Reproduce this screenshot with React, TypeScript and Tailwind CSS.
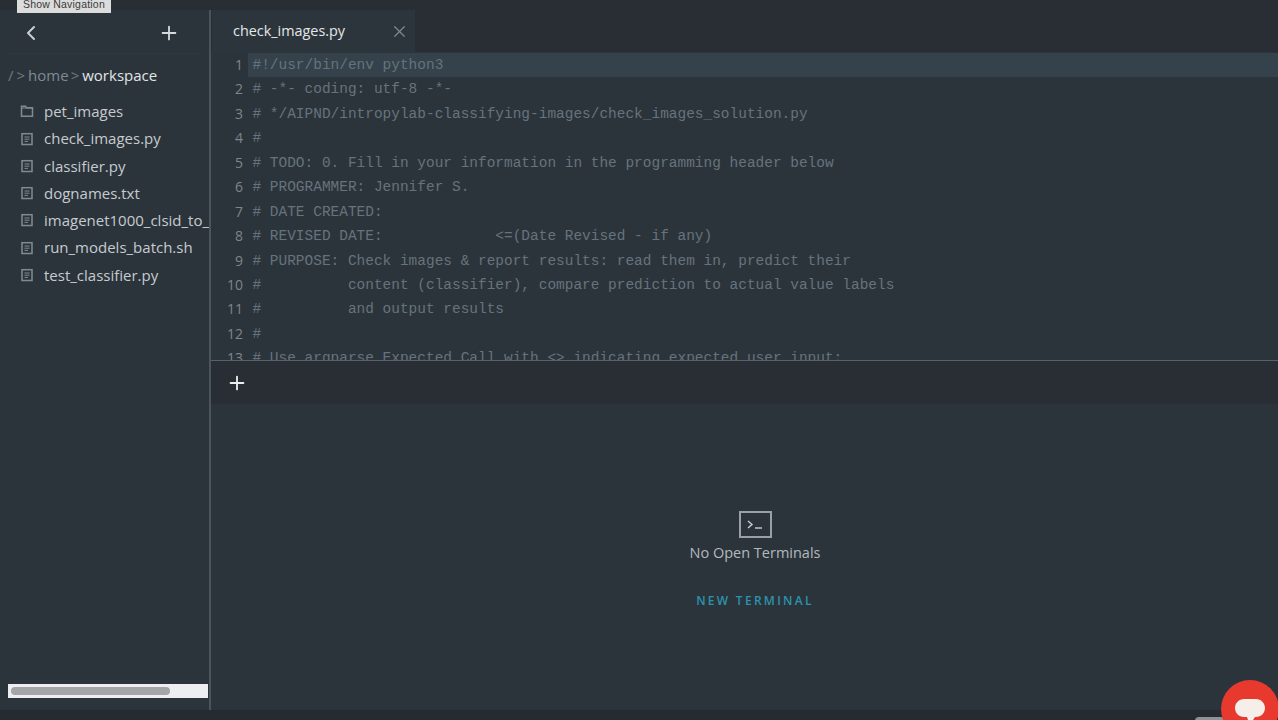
import { ChevronLeft, Plus, X } from 'lucide-react';

const UI_FONT = "font-['Open_Sans','Noto_Sans',sans-serif]";

const files = [
  { name: 'pet_images', folder: true },
  { name: 'check_images.py' },
  { name: 'classifier.py' },
  { name: 'dognames.txt' },
  { name: 'imagenet1000_clsid_to_' },
  { name: 'run_models_batch.sh' },
  { name: 'test_classifier.py' },
];

const code = [
  '#!/usr/bin/env python3',
  '# -*- coding: utf-8 -*-',
  '# */AIPND/intropylab-classifying-images/check_images_solution.py',
  '#',
  '# TODO: 0. Fill in your information in the programming header below',
  '# PROGRAMMER: Jennifer S.',
  '# DATE CREATED:',
  '# REVISED DATE:             <=(Date Revised - if any)',
  '# PURPOSE: Check images & report results: read them in, predict their',
  '#          content (classifier), compare prediction to actual value labels',
  '#          and output results',
  '#',
  '# Use argparse Expected Call with <> indicating expected user input:',
];

function FolderIcon() {
  return (
    <svg width="14" height="14" viewBox="0 0 14 14" fill="none" stroke="#7f8b93" strokeWidth="1.5">
      <path d="M1.5 12.2V2.2h4l1 1.6h6v8.4z" />
      <path d="M1.5 4h11" strokeWidth="1" />
    </svg>
  );
}

function FileIcon() {
  return (
    <svg width="14" height="14" viewBox="0 0 14 14" fill="none" stroke="#7f8b93" strokeWidth="1.5">
      <rect x="2" y="1.7" width="10" height="10.8" />
      <path d="M4.5 5h5M4.5 7.2h5M4.5 9.4h3.5" strokeWidth="1" />
    </svg>
  );
}

function Sidebar() {
  return (
    <aside className="w-[209px] shrink-0 flex flex-col border-r-2 border-[#4c545b] box-content">
      <div className="h-[44px] mx-2 pt-[2px] flex items-center justify-between pl-[11px] pr-[21px] border-b border-[#30373e]">
        <ChevronLeft className="w-6 h-6 text-[#c9ced1]" strokeWidth={2} />
        <Plus className="w-[22px] h-[22px] text-[#d5d9dc]" strokeWidth={2} />
      </div>
      <div className="mt-[9px] pl-2 h-6 flex items-center text-[15px] whitespace-nowrap">
        <span className="text-[#6d7880]">/</span>
        <span className="text-[#6d7880] ml-[3px]">&gt;</span>
        <span className="text-[#7d8a92] ml-[3px]">home</span>
        <span className="text-[#6d7880] ml-[2px]">&gt;</span>
        <span className="text-[#e2e5e7] ml-[3px]">workspace</span>
      </div>
      <ul className="mt-[10.6px] flex flex-col">
        {files.map((f) => (
          <li key={f.name} className="h-[27.3px] flex items-center pl-[20px] overflow-hidden whitespace-nowrap">
            <span className="w-6 shrink-0">{f.folder ? <FolderIcon /> : <FileIcon />}</span>
            <span className="text-[15px] text-[#c6cbcf]">{f.name}</span>
          </li>
        ))}
      </ul>
      <div className="mt-auto mb-[12px] ml-2 h-[14px] w-[200px] bg-[#eceef1] flex items-center pl-[3px]">
        <div className="w-[159px] h-2 rounded-full bg-[#a3a5a9]" />
      </div>
    </aside>
  );
}

function Editor() {
  return (
    <section className="h-[350px] shrink-0 flex flex-col border-b-2 border-[#59616a] box-content -mb-px">
      <div className="h-[42px] shrink-0 bg-[#282e34] flex pl-[1px]">
        <div className="w-[203px] bg-[#2d353c] flex items-center justify-between pl-[21px] pr-[6px]">
          <span className="text-[14.4px] text-[#e4e7e9]">check_images.py</span>
          <X className="w-[19px] h-[19px] text-[#7e888f]" strokeWidth={1.5} />
        </div>
      </div>
      <div className="flex-1 overflow-hidden pt-[1px] font-['Liberation_Mono',monospace] text-[14.46px] leading-[24.45px] whitespace-pre">
        {code.map((line, i) => (
          <div key={i} className={`flex h-[24.45px] ${i === 0 ? 'bg-[#35424b]' : ''}`}>
            <span className={`w-[37px] shrink-0 pr-[5px] text-right text-[14px] text-[#7c868d] ${i === 0 ? 'bg-[#2c343b]' : ''} font-['Open_Sans',sans-serif]`}>
              {i + 1}
            </span>
            <span className="pl-[4.5px] text-[#66737c]">{line}</span>
          </div>
        ))}
      </div>
    </section>
  );
}

function Terminal() {
  return (
    <section className="flex-1 flex flex-col min-h-0">
      <div className="h-[43px] shrink-0 bg-[#282e34] flex items-center pl-[15px]">
        <Plus className="w-[22px] h-[22px] text-[#eceef0]" strokeWidth={2} />
      </div>
      <div className="flex-1 flex flex-col items-center pt-[107px] pl-[21px]">
        <div className="w-[33px] h-[27px] border-2 border-[#9aa1a6] flex items-center justify-center">
          <svg width="17" height="10" viewBox="0 0 17 10" fill="none" stroke="#c9cdd0" strokeWidth="1.4">
            <path d="M1 1l4 3.5L1 8" />
            <path d="M8 8h7" />
          </svg>
        </div>
        <div className="mt-[5px] text-[14.5px] leading-5 text-[#b3b9bd]">No Open Terminals</div>
        <div className="mt-[28px] text-[12px] leading-5 font-semibold tracking-[0.19em] text-[#2a93ad]">NEW TERMINAL</div>
      </div>
    </section>
  );
}

export default function App() {
  return (
    <div className={`relative w-[1278px] h-[720px] overflow-hidden bg-[#2c343b] flex flex-col ${UI_FONT}`}>
      <div className="h-[10px] shrink-0 bg-[#282e34]" />
      <div className="flex-1 flex min-h-0">
        <Sidebar />
        <main className="flex-1 flex flex-col min-w-0">
          <Editor />
          <Terminal />
        </main>
      </div>
      <div className="h-[10px] shrink-0 bg-[#262b31]" />

      <div className="absolute left-[17px] top-0 w-[94px] h-[13px] overflow-hidden bg-[#dcdcdc] flex items-end justify-center pb-[2px] font-['Liberation_Sans',sans-serif] text-[10.5px] leading-[14px] tracking-[0.02em] text-[#3a3a3a]">
        Show Navigation
      </div>

      <div className="absolute left-[1195px] top-[717px] w-[30px] h-[6px] rounded-t-sm bg-[#8d9398]" />
      <div className="absolute left-[1221px] top-[680px] w-[58px] h-[58px] rounded-full bg-[#e8392e]" />
      <svg className="absolute left-[1235px] top-[699px]" width="30" height="21" viewBox="0 0 30 21">
        <path d="M9 0h12c5 0 9 4 9 9s-4 9-9 9h-1l-2 3h-5l-1-3H9c-5 0-9-4-9-9s4-9 9-9z" fill="#f6efe9" />
      </svg>
    </div>
  );
}
